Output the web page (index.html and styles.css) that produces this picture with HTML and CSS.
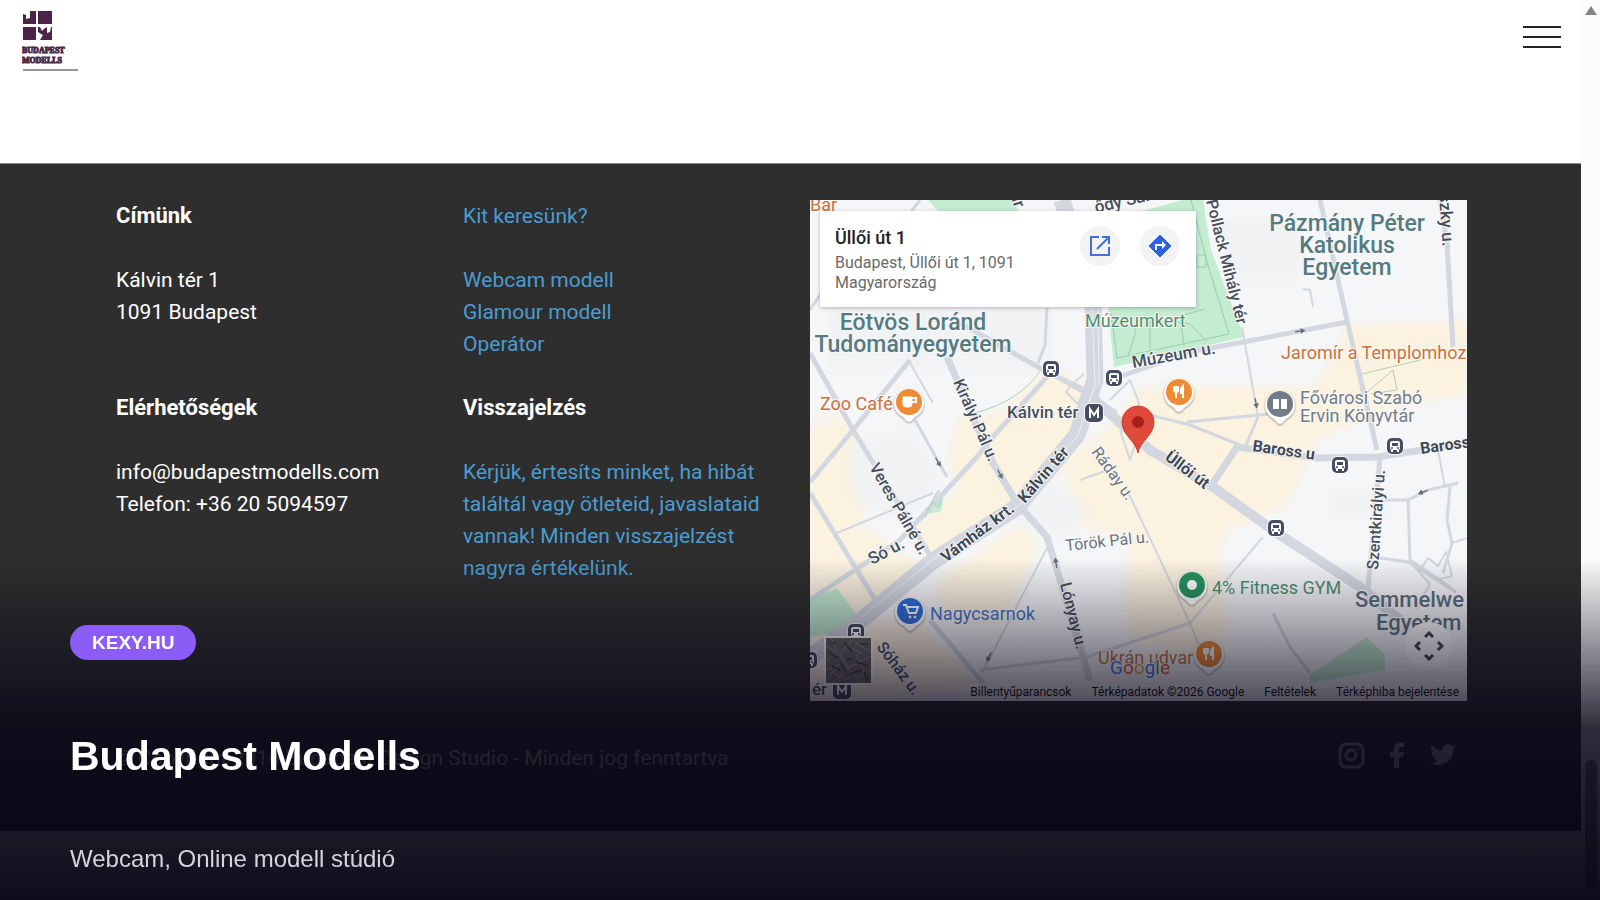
FILE: index.html
```html
<!DOCTYPE html>
<html lang="hu">
<head>
<meta charset="utf-8">
<title>Budapest Modells</title>
<meta name="viewport" content="width=device-width, initial-scale=1">
<link rel="stylesheet" href="styles.css">
</head>
<body>
<div class="window">
  <div class="page">
    <header class="topbar">
      <a class="logo" href="#" aria-label="Budapest Modells">
        <svg width="60" height="64" viewBox="0 0 60 64">
          <g fill="#4d2347">
            <path d="M1 4l3 1v4l4-1V1h6v13H1z"/>
            <path d="M16 1h14v13H16zM1 17h13v13H1z"/>
            <path d="M16 17h2l2 4 2-2 3-2v6l3-1 1-5h1v13H18l3-5-2-1-3-2z"/>
          </g>
          <text class="logo-text" x="0" y="43">BUDAPEST</text>
          <text class="logo-text" x="0" y="53">MODELLS</text>
          <path d="M1 60h55" stroke="#9a929a" stroke-width="2"/>
        </svg>
      </a>
      <button class="menu" type="button" aria-label="Menü"><span></span><span></span><span></span></button>
    </header>
    <footer class="footer">
      <div class="columns">
        <section class="column">
          <h2>Címünk</h2>
          <p>Kálvin tér 1<br>1091 Budapest</p>
          <h2 class="second">Elérhetőségek</h2>
          <p>info@budapestmodells.com<br>Telefon: +36 20 5094597</p>
        </section>
        <section class="column">
          <a href="#">Kit keresünk?</a>
          <p><a href="#">Webcam modell</a><br><a href="#">Glamour modell</a><br><a href="#">Operátor</a></p>
          <h2>Visszajelzés</h2>
          <p><a href="#">Kérjük, értesíts minket, ha hibát találtál vagy ötleteid, javaslataid vannak! Minden visszajelzést nagyra értékelünk.</a></p>
        </section>
        <div class="map">
          <svg class="map-canvas" viewBox="0 0 657 501" preserveAspectRatio="xMidYMid slice">
            <defs>
              <filter id="soft"><feGaussianBlur stdDeviation="5"/></filter>
              <g id="bus"><rect x="-9" y="-9" width="18" height="18" rx="6" fill="#fff" opacity=".8"/><rect x="-8" y="-8" width="16" height="16" rx="5" fill="#454d62"/><rect x="-5" y="-5" width="10" height="9" rx="2" fill="#fff"/><path d="M-3-3h6v3h-6z" fill="#454d62"/><path d="M-4 5h2M2 5h2" stroke="#fff" stroke-width="2"/><circle cx="-3" cy="2" r="1" fill="#454d62"/><circle cx="3" cy="2" r="1" fill="#454d62"/></g>
              <g id="metro"><rect x="-10" y="-10" width="20" height="20" rx="6" fill="#fff" opacity=".8"/><rect x="-9" y="-9" width="18" height="18" rx="5" fill="#454d62"/><path d="M-4 5v-9l4 6 4-6v9" fill="none" stroke="#fff" stroke-width="2"/></g>
              <path id="poi" d="M0 19c-3 0-4-4-8-6a15 15 0 1 1 16 0c-4 2-5 6-8 6z"/>
              <g id="food" fill="none" stroke="#fff"><path d="M-5-6v4q0 2 2 2t2-2v-4M-3-6v12" stroke-width="2"/><path d="M4 6v-12q-3 3-2 7h2" stroke-width="2" fill="#fff"/></g>
              <path id="arrow" d="M-7-1h8v-3l7 4-7 4v-3h-8z" fill="#666e79"/>
            </defs>
            <rect width="657" height="501" fill="#f5f6f8"/>
            <g fill="#fbf2df" filter="url(#soft)">
              <path d="M0 228L30 215 65 262 50 325 110 365 60 430 0 400zM150 215h40l50-50 38 25-10 70-70 50-80 52-20-32 50-40-10-30z"/>
              <path d="M330 188l175-2 20-30 10-30 122-6v75l-90 15-60 30-30 65-60 25-15 40-30 60-60-20 10-70-70-20 10-60 40-35z"/>
              <path d="M130 380l80-55 20 20-40 80-60-10zM0 430l110-10 60 70-170 11zM320 360l90-10 10 80-30 30-70-20z"/>
            </g>
            <g fill="#f0f2f4" filter="url(#soft)">
              <path d="M40 245l60-15 35 50-50 40-40-20zM200 320l40-40 40 30-30 30zM410 20h80v60h-70zM520 290h60v25h-60zM20 20h220v150H20z"/>
            </g>
            <g fill="#c3ecd1">
              <path d="M118 0h85l6 12h-80zM328 12l45-12h20l8 50 33 87-130 30-6-62zM0 400l27-12 20 27-17 17-30 5zM500 475l57-38 18 18v15l-75 13zM113 314l16-24c6 10 4 16 1 22z"/>
            </g>
            <path d="M381 0l16 62 22 72-112 24-6-45M387 55l9 0v12h-9zM395 109l-25 7 4 30M340 121v36M355 120l25 4 17 18M320 118l6 14-8 24" fill="none" stroke="#98cfad" stroke-width="1"/>
            <g class="roads">
              <path stroke-width="3" d="M237 108l-2 37-7 18M237 172l70 40M105 220l32 57M170 470l107-13 103-34M463 413l17 34 20 26M377 222l93-9M320 210l60 15 50 20M448 217l-12 28M567 300h31l2 60 40 27M598 300l20-10 30-7M640 287l-3 33 5 23-9 30M563 357l35 5 48 30M60 20L0 110M110 0L40 90"/>
              <path stroke-width="2" d="M432 127l16 90M503 107l-3-17-7-1M100 163l23 40M27 333l96-40M237 348l-65 125M317 290l63 133 20 50M453 337l-73 86M628 250l7 37M642 343l15-5M256 192l6-8 12 6-6 14zM262 184l12-10M300 200l20-20 8 20 4 20M290 245l8 25-28 10M310 230l10 30 10-30M610 370l8-12 10 8 8-14 6 24-16 4zM600 362l20 22-14 25"/>
              <path stroke-width="5" d="M0 153l43 77 80 130M237 177l-57 63-13 17-77 83-90 60M0 293l67 110M100 160l-57 70-43 52M120 420l53 63M150 123l87 49 48 23M510 0l27 120 30 130M570 257l-12 133M637 43l6 104M300 180l80-28 53-10 104-20M630 0l8 50"/>
              <path stroke-width="7" d="M137 157l46 106 24 40 30 34 11 36 32 107M403 283l24-36 80 11 60-1 90-14"/>
              <path stroke-width="10" d="M285 200l55 50 63 37 64 46 83 54 40 33"/>
              <path stroke-width="17" d="M252 0l31 100 2 80-18 55-60 72-84 54-73 60-50 36"/>
            </g>
            <path d="M282 100l3 85-17 50-58 70-84 52-74 60M288 100l1 85" fill="none" stroke="#eceff4" stroke-width="1"/>
            <path d="M552 174l62-15M555 194l28-24 4 20-26 4M165 213q45-12 65-42M115 318q10-25 14-28M116 310l8-8 4 6 4-10" fill="none" stroke="#a9d4b4" stroke-width="1"/>
            <use href="#arrow" transform="translate(490 131) rotate(-8) scale(.7)"/>
            <use href="#arrow" transform="translate(446 203) rotate(80) scale(.7)"/>
            <use href="#arrow" transform="translate(128 262) rotate(60) scale(.7)"/>
            <use href="#arrow" transform="translate(190 274) rotate(62) scale(.7)"/>
            <use href="#arrow" transform="translate(246 363) rotate(-100) scale(.7)"/>
            <use href="#arrow" transform="translate(179 457) rotate(115) scale(.7)"/>
            <use href="#arrow" transform="translate(613 292) rotate(160) scale(.7)"/>
            <g class="street">
              <text transform="translate(323 168) rotate(-10)">Múzeum u.</text>
              <text class="small" transform="translate(396 1) rotate(76)">Pollack Mihály tér</text>
              <text transform="translate(629 -6) rotate(86)">szky u.</text>
              <text transform="translate(286 13) rotate(-13)">ődy Sándor u.</text>
              <text transform="translate(200 -6) rotate(72)">ár</text>
              <text class="small" transform="translate(143 182) rotate(66)">Királyi Pál u.</text>
              <text class="small" transform="translate(59 267) rotate(60)">Veres Pálné u.</text>
              <text transform="translate(62 365) rotate(-28)">Só u.</text>
              <text class="small" transform="translate(250 384) rotate(76)">Lónyay u.</text>
              <text class="small" transform="translate(66 447) rotate(53)">Sóház u.</text>
              <text class="small" transform="translate(568 370) rotate(-86)">Szentkirályi u.</text>
              <text x="197" y="218">Kálvin tér</text>
              <text x="2" y="495">ér</text>
            </g>
            <g class="street minor">
              <text class="small" transform="translate(281 252) rotate(54)">Ráday u.</text>
              <text class="small" transform="translate(256 351) rotate(-6)">Török Pál u.</text>
            </g>
            <g class="street major">
              <text class="small" transform="translate(442 251) rotate(8)">Baross u</text>
              <text class="small" transform="translate(611 254) rotate(-8)">Baross u.</text>
              <text class="small" transform="translate(354 259) rotate(37)">Üllői út</text>
              <text class="small" transform="translate(215 304) rotate(-49)">Kálvin tér</text>
              <text class="small" transform="translate(136 363) rotate(-37)">Vámház krt.</text>
            </g>
            <g class="area">
              <text x="103" y="130">Eötvös Loránd</text>
              <text x="103" y="152">Tudományegyetem</text>
              <text x="537" y="31">Pázmány Péter</text>
              <text x="537" y="53">Katolikus</text>
              <text x="537" y="75">Egyetem</text>
            </g>
            <g class="area start">
              <text x="545" y="407">Semmelwe</text>
              <text x="566" y="430">Egyetem</text>
            </g>
            <g class="place">
              <text class="green" x="275" y="127">Múzeumkert</text>
              <text class="orange" x="0" y="11">Bar</text>
              <text class="orange" x="10" y="210">Zoo Café</text>
              <text class="orange" x="471" y="159">Jaromír a Templomhoz</text>
              <text class="grey" x="490" y="204">Fővárosi Szabó</text>
              <text class="grey" x="490" y="222">Ervin Könyvtár</text>
              <text class="blue" x="120" y="420">Nagycsarnok</text>
              <text class="green" x="402" y="394">4% Fitness GYM</text>
              <text class="orange" x="288" y="464">Ukrán udvar</text>
            </g>
            <use href="#bus" x="241" y="169"/><use href="#bus" x="304" y="178"/><use href="#bus" x="530" y="265"/><use href="#bus" x="585" y="246"/><use href="#bus" x="466" y="328"/><use href="#bus" x="46" y="432"/><use href="#bus" x="-1" y="460"/>
            <use href="#metro" x="284" y="213"/><use href="#metro" x="32" y="490"/>
            <g class="pois">
              <use href="#poi" x="99" y="203"/><use href="#poi" x="369" y="193"/><use href="#poi" x="470" y="205"/><use href="#poi" x="100" y="412"/><use href="#poi" x="382" y="386"/><use href="#poi" x="399" y="455"/>
            </g>
            <circle cx="99" cy="202" r="13" fill="#ee8b35"/><path d="M93 197h9v7q0 3-3 3h-3q-3 0-3-3z" fill="#fff" stroke="#fff"/><path d="M102 198h4v4h-4" fill="none" stroke="#fff" stroke-width="2"/>
            <circle cx="369" cy="192" r="13" fill="#ee8b35"/><use href="#food" x="369" y="192"/>
            <circle cx="470" cy="204" r="13" fill="#727c87"/><path d="M463 199h6v10h-6zM471 199h6v10h-6z" fill="#fff"/>
            <circle cx="100" cy="411" r="13" fill="#2f6fd8"/><path d="M93 405h3l3 8h7l2-6h-11" fill="none" stroke="#fff" stroke-width="2"/><circle cx="100" cy="417" r="1" fill="#fff" stroke="#fff"/><circle cx="105" cy="417" r="1" fill="#fff" stroke="#fff"/>
            <circle cx="382" cy="385" r="13" fill="#26935f"/><circle cx="382" cy="385" r="5" fill="#fff"/>
            <circle cx="399" cy="454" r="13" fill="#ee8b35"/><use href="#food" x="399" y="454"/>
            <path d="M328 253c-2-12-16-18-16-31a16 16 0 0 1 32 0c0 13-14 19-16 31z" fill="#e04a3a" stroke="#c63c30"/>
            <circle cx="328" cy="222" r="6" fill="#a8201a"/>
            <text class="google" x="300" y="474"><tspan fill="#4277dd">G</tspan><tspan fill="#d9503f">o</tspan><tspan fill="#dfa832">o</tspan><tspan fill="#4277dd">g</tspan><tspan fill="#2f9a57">l</tspan><tspan fill="#d9503f">e</tspan></text>
          </svg>
          <div class="card">
            <div class="card-text">
              <strong>Üllői út 1</strong>
              <span>Budapest, Üllői út 1, 1091 Magyarország</span>
            </div>
            <a class="round" href="#" aria-label="Megnyitás a Térképen"><svg width="24" height="24" viewBox="0 0 24 24" fill="none" stroke="#3f6fe0" stroke-width="2"><path d="M11 3H3v18h18v-8M14 3h7v7M21 3L9 15"/></svg></a>
            <a class="round" href="#" aria-label="Útvonalterv"><svg width="24" height="24" viewBox="0 0 24 24"><path d="M12 1l11 11-11 11L1 12z" fill="#2c62e0" stroke="#2c62e0" stroke-linejoin="round"/><path d="M8 16v-5h7" fill="none" stroke="#fff" stroke-width="2"/><path d="M14 7l4 4-4 4z" fill="#fff"/></svg></a>
          </div>
          <button class="satellite" type="button" aria-label="Műholdkép">
            <svg viewBox="0 0 45 45" width="100%" height="100%"><rect width="45" height="45" fill="#636160"/><path d="M0 8l14 8 12-14M5 0l6 12L0 24M14 16l8 14 23-12M22 30L6 45M22 30l14 15M0 32l18-8M28 4l17 10M30 16l10 22M8 36l14 6M26 10l10 6M0 42l12-14" stroke="#8b8886" stroke-width="1" fill="none"/><path d="M2 14l10 6M18 4l8 10M30 24l12 4M24 36l12-4M6 28l8 4M34 6l8 0M14 24l6 10M38 34l4 8M4 4l6 2M26 20l-6 2" stroke="#454547" stroke-width="2"/></svg>
          </button>
          <button class="round pan" type="button" aria-label="Kamera vezérlése"><svg width="30" height="30" viewBox="0 0 30 30" fill="none" stroke="#4a4a4e" stroke-width="3"><path d="M11 6l4-4 4 4M11 24l4 4 4-4M6 11l-4 4 4 4M24 11l4 4-4 4"/></svg></button>
          <div class="credits"><button type="button">Billentyűparancsok</button><span>Térképadatok ©2026 Google</span><a href="#">Feltételek</a><a href="#">Térképhiba bejelentése</a></div>
        </div>
      </div>
      <div class="legal">
        <p>© Copyright 2016 Budapest Design Studio - Minden jog fenntartva</p>
        <nav class="social" aria-label="Közösségi oldalak">
          <a href="#" aria-label="Instagram"><svg width="28" height="28" viewBox="0 0 28 28" fill="none" stroke="currentColor" stroke-width="3"><rect x="3" y="3" width="23" height="23" rx="6"/><circle cx="14" cy="14" r="5"/><circle cx="21" cy="8" r="1" stroke-width="1"/></svg></a>
          <a href="#" aria-label="Facebook"><svg width="28" height="28" viewBox="0 0 28 28" fill="currentColor"><path d="M11 27V16H7v-5h4V8c0-5 3-7 10-6v4c-4 0-5 0-5 3v2h5l-1 5h-4v11z"/></svg></a>
          <a href="#" aria-label="Twitter"><svg width="28" height="28" viewBox="0 0 24 24" fill="currentColor"><path d="M23 5a9 9 0 0 1-2.600.7 4.500 4.500 0 0 0 2-2.500 9 9 0 0 1-2.900 1.100 4.500 4.500 0 0 0-7.700 4.100A13 13 0 0 1 2.500 3.700a4.500 4.500 0 0 0 1.400 6 4.500 4.500 0 0 1-2-.6 4.500 4.500 0 0 0 3.600 4.500 4.500 4.500 0 0 1-2 .1 4.500 4.500 0 0 0 4.200 3.100A9 9 0 0 1 1 18.700 13 13 0 0 0 20.700 7.100 9 9 0 0 0 23 5z"/></svg></a>
        </nav>
      </div>
    </footer>
  </div>
  <div class="scrollbar"><span class="up"></span><span class="thumb"></span></div>
  <div class="caption">
    <span class="badge">KEXY.HU</span>
    <h1>Budapest Modells</h1>
    <p>Webcam, Online modell stúdió</p>
  </div>
</div>
</body>
</html>
```
FILE: styles.css
```css
* { box-sizing: border-box; }
body { margin: 0; background: #fff; }
h1, h2, p { margin: 0; }
a { color: inherit; text-decoration: none; }
button { border: 0; padding: 0; background: none; font: inherit; color: inherit; cursor: pointer; }
svg { display: block; }

.window { position: relative; display: flex; min-height: 100vh; overflow: hidden; }
.page { flex: 1; min-width: 0; }

.topbar { display: flex; justify-content: space-between; align-items: flex-start; height: 163px; padding: 10px 20px 0 22px; }
.logo-text { font: bold 8px "Liberation Serif", serif; fill: #4a2a44; stroke: #4a2a44; }
.menu { display: grid; gap: 8px; width: 38px; margin-top: 16px; }
.menu span { height: 2px; background: #262329; }

.footer { padding: 36px 114px 56px 116px; border-top: 1px solid #8a8a8a; background: #2e2e2e; color: #fff; font: 21px/32px Roboto, sans-serif; }
.columns { display: grid; grid-template-columns: 347fr 347fr 657fr; }
.column { padding-right: 30px; }
.column h2 { font-size: 22px; line-height: 32px; }
.column a { color: #4b9cd0; }
.column p { margin: 32px 0; }
.column .second { margin-top: 64px; }

.map { position: relative; aspect-ratio: 657 / 501; overflow: hidden; }
.map-canvas { width: 100%; height: 100%; }
.roads path { fill: none; stroke: #d3d8e0; stroke-linejoin: round; }
.map-canvas text { paint-order: stroke; stroke: #f8f8f8; stroke-width: 2px; }
.street { font-size: 17px; font-weight: 500; fill: #474f5c; }
.small { font-size: 16px; }
.minor { font-weight: 400; fill: #6b727c; }
.major { font-weight: 700; fill: #414855; }
.area { font-size: 23px; font-weight: 500; fill: #557b80; text-anchor: middle; }
.start { font-size: 22px; text-anchor: start; fill: #5d7180; }
.place { font-size: 18px; }
.green { fill: #4f8d70; }
.orange { fill: #c9723f; }
.grey { fill: #747c86; }
.blue { fill: #4973c8; }
.google { font-size: 19px; }
.pois { fill: #fff; filter: drop-shadow(0 1px 1px #0006); }

.card { position: absolute; left: 10px; top: 11px; display: flex; align-items: flex-start; gap: 20px; width: 376px; height: 96px; padding: 15px 16px 0 15px; background: #fff; box-shadow: 0 1px 4px #0004; }
.card-text { flex: 1; font-size: 16px; line-height: 20px; color: #6a6a6a; }
.card-text strong { display: block; margin-bottom: 3px; font-size: 18px; font-weight: 500; line-height: 24px; color: #222; }
.card-text span { display: block; width: 190px; }
.round { display: grid; place-items: center; width: 40px; height: 40px; border-radius: 50%; background: #f3f3f3; }
.pan { position: absolute; right: 14px; bottom: 31px; width: 48px; height: 48px; background: #fff; }
.satellite { position: absolute; left: 14px; bottom: 16px; width: 49px; height: 49px; border: 2px solid #fff; }
.credits { position: absolute; right: 0; bottom: 0; display: flex; gap: 20px; padding: 0 8px; font-size: 12px; line-height: 17px; color: #111; background: #ffffff80; }

.legal { display: flex; justify-content: space-between; align-items: center; margin-top: 40px; color: #c8c8c8; }
.social { display: flex; gap: 18px; padding: 0 10px 6px 0; }

.scrollbar { display: flex; flex-direction: column; justify-content: space-between; align-items: center; width: 19px; padding: 6px 0 10px; background: #fcfcfc; }
.up { border: 6px solid transparent; border-top: 0; border-bottom: 9px solid #858585; }
.thumb { width: 12px; height: 130px; border-radius: 6px; background: #888; }

.caption { position: absolute; inset: 0; display: flex; flex-direction: column; justify-content: flex-end; align-items: flex-start; padding: 0 70px 27px; color: #fff; font-family: "Liberation Sans", sans-serif; background: linear-gradient(transparent 62%, #0a0718d9 81%, #080614f8); }
.badge { padding: 0 22px; border-radius: 18px; background: #8b5cf6; font-size: 19px; font-weight: 700; line-height: 35px; }
.caption h1 { margin: 73px 0 65px; font-size: 41px; line-height: 47px; }
.caption p { font-size: 24px; line-height: 28px; color: #d5d3e0; }
```
